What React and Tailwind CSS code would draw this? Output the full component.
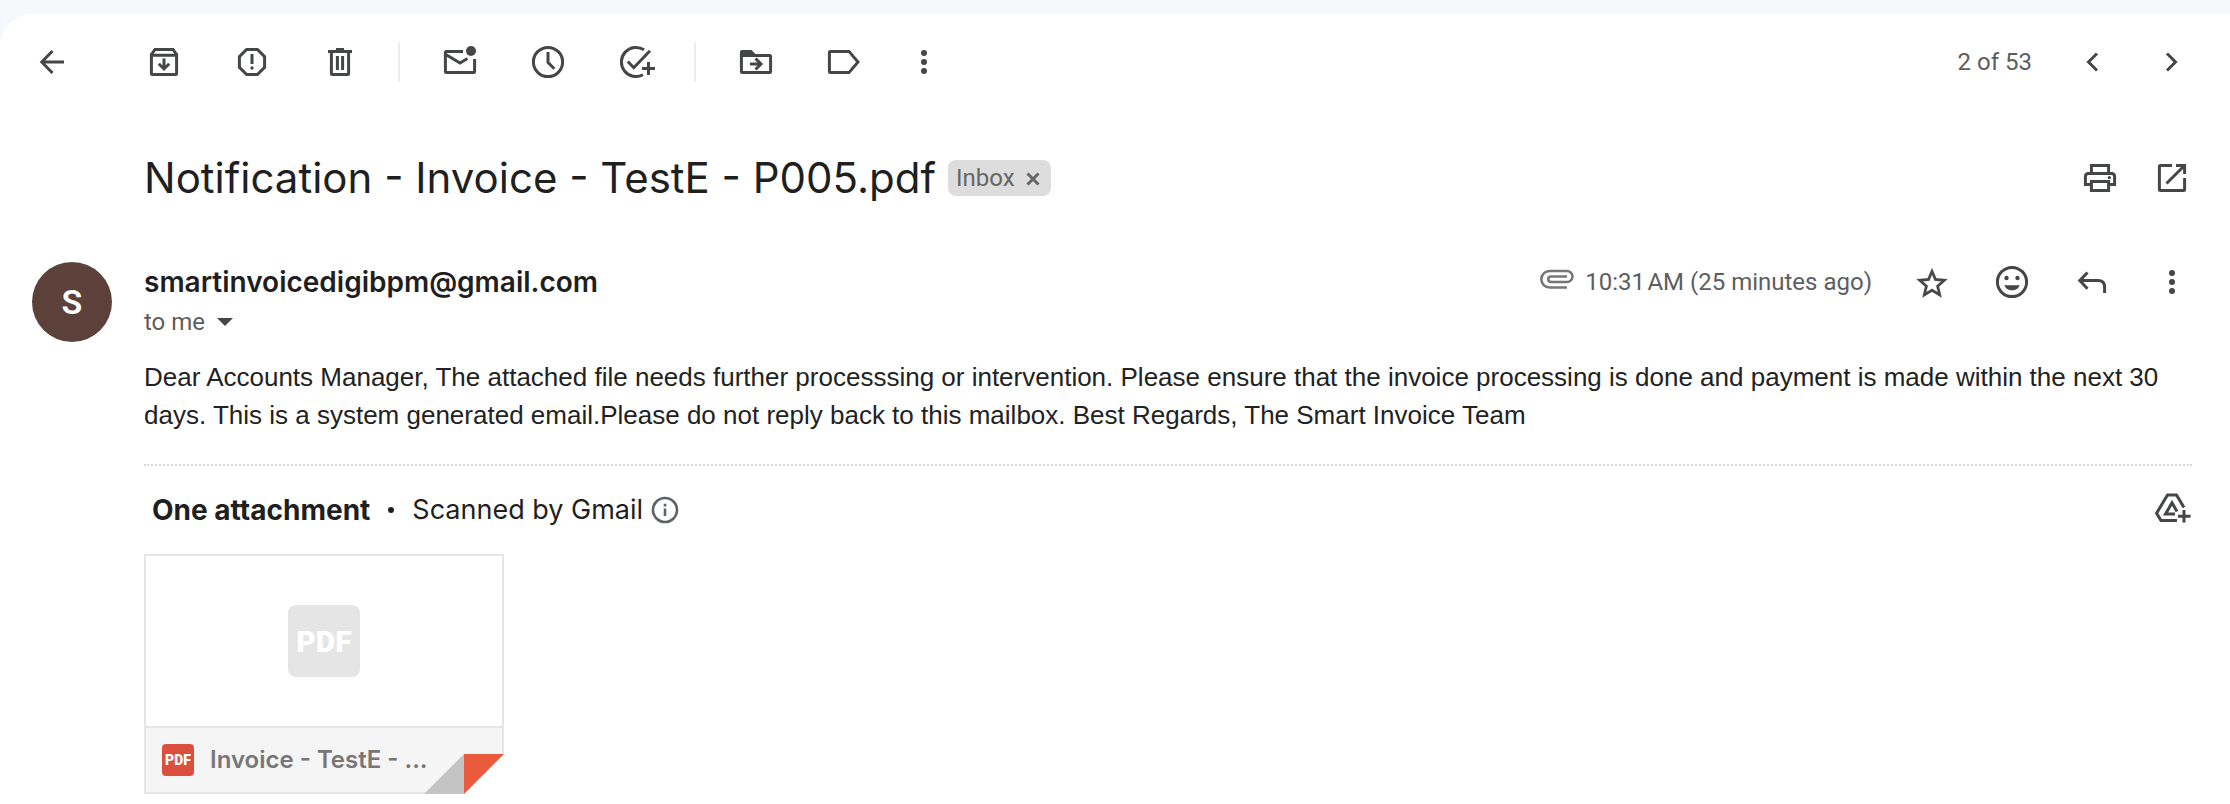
const INTER = "font-['Inter',sans-serif]";
const ROBOTO = "font-['Roboto',sans-serif]";

function Icon({ children, className = 'size-10' }) {
  return (
    <svg viewBox="0 0 40 40" className={className} fill="none" stroke="currentColor" strokeWidth="3" aria-hidden="true">
      {children}
    </svg>
  );
}

function IconButton({ label, children }) {
  return (
    <button type="button" aria-label={label} className="size-10 shrink-0 text-[#444746]">
      {children}
    </button>
  );
}

function Divider() {
  return <div className="mr-10 ml-[38px] h-10 w-0.5 shrink-0 bg-[#ececec]" />;
}

function DotsIcon() {
  return (
    <Icon>
      <g fill="currentColor" stroke="none">
        <circle cx="20" cy="11" r="3" />
        <circle cx="20" cy="20" r="3" />
        <circle cx="20" cy="29" r="3" />
      </g>
    </Icon>
  );
}

function Toolbar() {
  return (
    <header className="flex h-24 items-center justify-between pr-[38px] pl-8">
      <div className="flex items-center">
        <IconButton label="Back">
          <Icon><path d="M20.5 9 9.8 20l10.7 11M10 20h22" /></Icon>
        </IconButton>
        <div className="ml-[72px] flex gap-12">
          <IconButton label="Archive">
            <Icon>
              <path d="M7.4 12.4v19.2q0 1 1 1h23.2q1 0 1-1V12.4L29 7.4H11zM7.4 13.2h25.2" />
              <path d="M20 16.5v10M14.8 21.8l5.2 5.2 5.2-5.2" />
            </Icon>
          </IconButton>
          <IconButton label="Report spam">
            <Icon>
              <path d="M14.6 7.4h10.8l7.2 7.2v10.8l-7.2 7.2H14.6l-7.2-7.2V14.6zM20 12v10" />
              <circle cx="20" cy="26" r="1.7" fill="currentColor" stroke="none" />
            </Icon>
          </IconButton>
          <IconButton label="Delete">
            <Icon>
              <path d="M8 9.4h24M16 7.4h8M11.4 9v22.6q0 1 1 1h15.2q1 0 1-1V9M17.4 14v14M22.6 14v14" />
            </Icon>
          </IconButton>
        </div>
        <Divider />
        <div className="flex gap-12">
          <IconButton label="Mark as unread">
            <Icon>
              <path d="M23 9.4H6.4q-1 0-1 1v19.2q0 1 1 1h27.2q1 0 1-1V17M5.4 12.2 20 21l7.5-4.5" />
              <circle cx="31" cy="9" r="5" fill="currentColor" stroke="none" />
            </Icon>
          </IconButton>
          <IconButton label="Snooze">
            <Icon><circle cx="20" cy="20" r="14.6" /><path d="M20 10v10.5l6.3 6.3" /></Icon>
          </IconButton>
          <IconButton label="Add to tasks">
            <Icon>
              <path d="M28 7.8A14.6 14.6 0 1 0 27 32.8M11.8 19.5l6 6.2L34 8.8" />
              <path d="M32.5 20v13M26 26.5h13" />
            </Icon>
          </IconButton>
        </div>
        <Divider />
        <div className="flex gap-12">
          <IconButton label="Move to">
            <Icon>
              <path d="M5.4 13.4v16.2q0 1 1 1h27.2q1 0 1-1V14.4q0-1-1-1z" />
              <path d="M4 14v-4q0-2 2-2h9.5l4.5 4.5V14z" fill="currentColor" stroke="none" />
              <path d="M14 22h10.5M19.5 16.5 25 22l-5.5 5.5" />
            </Icon>
          </IconButton>
          <IconButton label="Labels">
            <Icon><path d="M6.4 9.4H25L34 20l-9 10.6H6.4q-1 0-1-1V10.4q0-1 1-1z" /></Icon>
          </IconButton>
        </div>
        <div className="ml-10 flex">
          <IconButton label="More"><DotsIcon /></IconButton>
        </div>
      </div>
      <div className="flex items-center gap-10">
        <span className={`${ROBOTO} text-2xl text-[#5e5e5e]`}>2 of 53</span>
        <IconButton label="Newer">
          <Icon><path d="M25 11.5 16.5 20l8.5 8.5" /></Icon>
        </IconButton>
        <IconButton label="Older">
          <Icon><path d="m15 11.5 8.5 8.5-8.5 8.5" /></Icon>
        </IconButton>
      </div>
    </header>
  );
}

function Subject() {
  return (
    <div className="mt-[38px] flex min-h-[60px] items-center justify-between pr-[38px] pl-36">
      <div className="flex items-center gap-3">
        <h1 className={`${INTER} text-[42px] leading-[60px] font-normal text-[#1f1f1f]`}>
          Notification - Invoice - TestE - P005.pdf
        </h1>
        <div className="flex h-9 items-center gap-2 rounded-lg bg-[#dddddd] px-2 text-[#666666]">
          <span className={`${ROBOTO} text-2xl`}>Inbox</span>
          <button type="button" aria-label="Remove label Inbox" className="size-5">
            <svg viewBox="0 0 20 20" className="size-5" fill="none" stroke="currentColor" strokeWidth="3" aria-hidden="true">
              <path d="m4.5 5.5 11 11m0-11-11 11" />
            </svg>
          </button>
        </div>
      </div>
      <div className="flex gap-8">
        <IconButton label="Print all">
          <Icon>
            <path d="M11.4 15V7.4h17.2V15" />
            <path d="M11 26.6H5.4V18.4q0-3 3-3h23.2q3 0 3 3v8.2H29" />
            <path d="M11.4 23.4h17.2v9.2H11.4z" />
            <circle cx="29.3" cy="19.6" r="1.6" fill="currentColor" stroke="none" />
          </Icon>
        </IconButton>
        <IconButton label="In new window">
          <Icon>
            <path d="M20 7.4H8.4q-1 0-1 1v23.2q0 1 1 1h23.2q1 0 1-1V20" />
            <path d="M24 7.4h8.6V16M32.5 7.5 14.5 25.5" />
          </Icon>
        </IconButton>
      </div>
    </div>
  );
}

function SenderLine() {
  return (
    <div className="flex h-10 items-center justify-between">
      <h2 className={`${INTER} text-[28px] leading-10 font-semibold text-[#1f1f1f]`}>smartinvoicedigibpm@gmail.com</h2>
      <div className="flex items-center gap-10">
        <div className="flex items-center gap-2.5 text-[#5e5e5e]">
          <svg viewBox="0 0 36 28" className="h-7 w-9 text-[#777777]" fill="none" stroke="currentColor" strokeWidth="2.6" role="img" aria-label="Has attachment">
            <path d="M28 19.5H10.6a8.25 8.25 0 0 1 0-16.5H28a5.5 5.5 0 0 1 0 11H12a2.75 2.75 0 0 1 0-5.5h16" />
          </svg>
          <span className={`${ROBOTO} text-2xl`}>10:31{'\u200A'}AM (25 minutes ago)</span>
        </div>
        <IconButton label="Star">
          <svg viewBox="-1 -2 26 26" className="size-10" fill="currentColor" stroke="currentColor" strokeWidth="0.2" aria-hidden="true">
            <path d="M22 9.24l-7.19-.62L12 2 9.19 8.63 2 9.24l5.46 4.73L5.82 21 12 17.27 18.18 21l-1.63-7.03L22 9.24zM12 15.4l-3.76 2.27 1-4.28-3.32-2.88 4.38-.38L12 6.1l1.71 4.04 4.38.38-3.32 2.88 1 4.28L12 15.4z" />
          </svg>
        </IconButton>
        <IconButton label="Add reaction">
          <Icon>
            <circle cx="20" cy="20" r="14.6" />
            <g fill="currentColor" stroke="none">
              <circle cx="14.5" cy="16" r="2.2" />
              <circle cx="25.5" cy="16" r="2.2" />
              <path d="M12.3 23.2h15.4c-1 3-4 5-7.7 5s-6.7-2-7.7-5z" />
            </g>
          </Icon>
        </IconButton>
        <IconButton label="Reply">
          <Icon><path d="M15.5 10.5 7.8 18.6l7.7 8.2M8 18.6h18q6.6 0 6.6 6.6V31" /></Icon>
        </IconButton>
        <IconButton label="More options"><DotsIcon /></IconButton>
      </div>
    </div>
  );
}

function AttachmentCard() {
  return (
    <a href="#attachment" className="relative flex w-[360px] flex-col border-2 border-[#e5e5e5]">
      <div className="flex h-[170px] items-center justify-center">
        <div className={`${ROBOTO} flex size-[72px] items-center justify-center rounded-lg bg-[#e5e5e5] text-[30px] font-black text-white`}>
          PDF
        </div>
      </div>
      <div className="flex h-[66px] items-center gap-4 border-t-2 border-[#e5e5e5] bg-[#f5f5f5] pr-[76px] pl-4">
        <div className={`${ROBOTO} flex size-8 shrink-0 items-center justify-center rounded bg-[#db4f3f] text-[14px] font-black text-white`}>
          PDF
        </div>
        <span className={`${INTER} text-2xl font-semibold whitespace-nowrap text-[#777777]`}>Invoice - TestE - ...</span>
      </div>
      <svg viewBox="0 0 80 40" className="absolute -right-0.5 -bottom-0.5 h-10 w-20" aria-hidden="true">
        <path d="M80 0v40H40z" fill="#ffffff" />
        <path d="M0 40 40 0v40z" fill="#c4c4c4" />
        <path d="M40 0h40L40 40z" fill="#ea5a3c" />
      </svg>
    </a>
  );
}

function Attachments() {
  return (
    <section className="mt-[30px] border-t-2 border-dotted border-[#d8d8d8]">
      <div className="flex h-[88px] items-center justify-between">
        <div className="flex items-center pl-2 text-[#1f1f1f]">
          <h3 className={`${INTER} text-[28px] font-bold`}>One attachment</h3>
          <span className="mx-[18px] size-1.5 rounded-full bg-[#1f1f1f]" />
          <span className={`${INTER} text-[27px]`}>Scanned by Gmail</span>
          <button type="button" aria-label="About scanning" className="ml-2 size-7 text-[#5f6368]">
            <svg viewBox="0 0 28 28" className="size-7" fill="none" stroke="currentColor" strokeWidth="2.6" aria-hidden="true">
              <circle cx="14" cy="14" r="12" />
              <path d="M14 12.5V20M14 7.8v2.8" />
            </svg>
          </button>
        </div>
        <IconButton label="Add to Drive">
          <Icon>
            <path d="m32 17.5-7.5-12.6h-9L4.6 23.2l4.4 7.4h16" />
            <path d="M25 21.5 20 12.8l-6.5 11.3H23M32 20v12.5M26 26.2h12.5" />
          </Icon>
        </IconButton>
      </div>
      <AttachmentCard />
    </section>
  );
}

export default function App() {
  return (
    <div className="min-h-screen bg-[#f6f8fc] pt-3.5">
      <main className="min-h-[calc(100vh-14px)] rounded-tl-[32px] bg-white pb-2">
        <Toolbar />
        <Subject />
        <article className="mt-[54px] flex gap-8 pr-[38px] pl-8">
          <div className={`${ROBOTO} flex size-20 shrink-0 items-center justify-center rounded-full bg-[#5b4139] text-[34px] font-semibold text-white`}>
            S
          </div>
          <div className="min-w-0 flex-1">
            <SenderLine />
            <div className="flex h-10 items-center gap-3 text-[#5e5e5e]">
              <span className={`${ROBOTO} text-2xl`}>to me</span>
              <button type="button" aria-label="Show details" className="w-4">
                <svg viewBox="0 0 16 8" className="h-2 w-4" fill="#444746" aria-hidden="true"><path d="M0 0h16L8 8z" /></svg>
              </button>
            </div>
            <p className="mt-4 font-['Liberation_Sans',sans-serif] text-[26px] leading-[38px] text-[#222222]">
              Dear Accounts Manager, The attached file needs further processsing or intervention. Please ensure that the
              invoice processing is done and payment is made within the next 30 days. This is a system generated
              email.Please do not reply back to this mailbox. Best Regards, The Smart Invoice Team
            </p>
            <Attachments />
          </div>
        </article>
      </main>
    </div>
  );
}
